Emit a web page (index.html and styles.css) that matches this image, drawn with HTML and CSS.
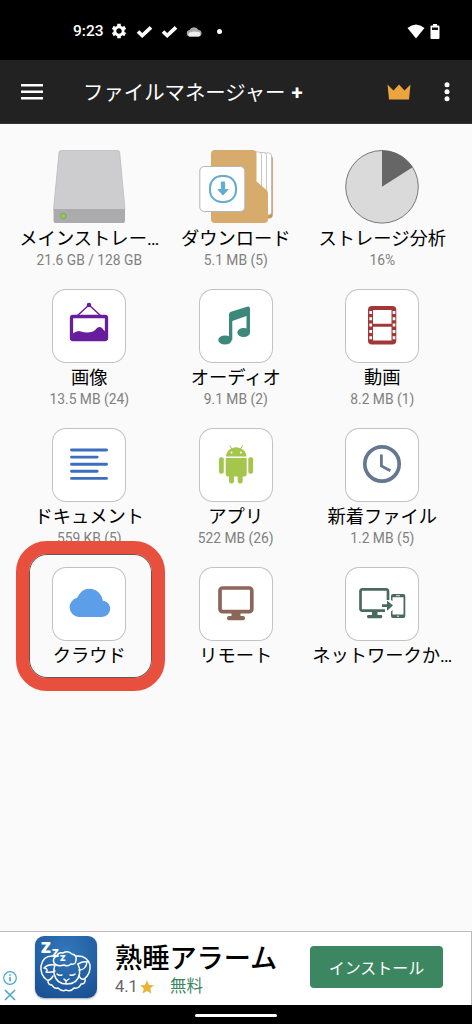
FILE: index.html
```html
<!DOCTYPE html>
<html lang="ja">
<head>
<meta charset="utf-8">
<title>ファイルマネージャー +</title>
<link rel="stylesheet" href="styles.css">
</head>
<body>
<div class="screen">
  <div class="status">
    <span class="time">9:23</span>
    <svg class="gear" width="16" height="16" viewBox="0 0 16 16"><circle cx="8" cy="8" r="4" fill="none" stroke="#fff" stroke-width="3"/><g stroke="#fff" stroke-width="3.6"><path d="M8 .8V4M8 12v3.2M1.8 4.4l2.7 1.6M11.5 10l2.7 1.6M1.8 11.6L4.500 10M11.500 6l2.700-1.600"/></g><circle cx="8" cy="8" r="2.500" fill="#000"/></svg>
    <svg class="check" width="17" height="13" viewBox="0 0 17 13"><path d="M2 6.500l4.200 4L15 2.300" fill="none" stroke="#fff" stroke-width="3.700"/></svg>
    <svg class="check" width="17" height="13" viewBox="0 0 17 13"><path d="M2 6.500l4.200 4L15 2.300" fill="none" stroke="#fff" stroke-width="3.700"/></svg>
    <svg class="wx" width="16" height="11" viewBox="0 0 16 11"><path d="M3.500 10.500a3.300 3.300 0 010-6.500A5 5 0 0112.500 4a3.300 3.300 0 01.5 6.500z" fill="#aaa"/><path d="M3 10.500a3 3 0 01.5-4l4.500-1 5 .5a2.500 2.500 0 010 4.500z" fill="#eee"/></svg>
    <span class="dot"></span>
    <svg class="wifi" width="18" height="15" viewBox="0 0 18 15"><path d="M.5 4Q9-3 17.500 4L9 14.500z" fill="#fff"/></svg>
    <svg width="10" height="15" viewBox="0 0 10 15"><path d="M3 0h4v1.500h1.500q1 0 1 1V14q0 1-1 1h-7q-1 0-1-1V2.500q0-1 1-1H3z" fill="#fff"/><path d="M2 3.500h6v2.500H2z" fill="#111"/></svg>
  </div>
  <div class="appbar">
    <svg width="22" height="16" viewBox="0 0 22 16"><path d="M0 1.300h22M0 7.800h22M0 14.300h22" stroke="#fff" stroke-width="2.500"/></svg>
    <span class="title">ファイルマネージャー<b>+</b></span>
    <svg class="crown" width="24" height="16" viewBox="0 0 24 16"><path d="M.5.500L6.500 6.500 12 .5l5.500 6L23.500.500 22 15.500H2z" fill="#eba43f"/></svg>
    <svg width="6" height="20" viewBox="0 0 6 20"><g fill="#fff"><circle cx="3" cy="2.700" r="2.500"/><circle cx="3" cy="9.700" r="2.500"/><circle cx="3" cy="16.700" r="2.500"/></g></svg>
  </div>
  <div class="grid">
    <div class="item">
      <svg class="art" viewBox="0 0 74 74"><path d="M9.500.5h56q2 0 2.200 2L73 59.500H1.500L7 2.500q.2-2 2.500-2z" fill="#cdcdcf" stroke="#bdbdbf" stroke-width=".8"/><path d="M1.500 59H73v12q0 2-2 2H3.500q-2 0-2-2z" fill="#ababad"/><circle cx="11.300" cy="66" r="2.700" fill="#93cc4c" stroke="#789c4a" stroke-width=".8"/></svg>
      <div class="label">メインストレー…</div><div class="sub">21.6 GB / 128 GB</div>
    </div>
    <div class="item">
      <svg class="art" viewBox="0 0 74 74"><rect x="50" y="5" width="23.800" height="63.500" rx="4" fill="#c8955a"/><g fill="#fff" stroke="#b9b9b9" stroke-width=".8"><rect x="45" y="3" width="27.500" height="62" rx="3"/><rect x="45" y="2.500" width="22.500" height="62" rx="3"/><rect x="40" y="2" width="22.500" height="60" rx="3"/></g><path d="M16 0h37.500q4 0 4 4v27.500L67.500 40q1.500 1.500 1.500 3.500V69q0 4-4 4H16q-4 0-4-4V4q0-4 4-4z" fill="#d7ab6b"/><rect x=".8" y="16.500" width="45" height="45" rx="4.500" fill="#fff" stroke="#b7b5b2"/><rect x="11" y="26" width="26" height="26" rx="11.500" fill="none" stroke="#62add1" stroke-width="2"/><path d="M22.300 32h3.400v7.500H29L24 45l-5-5.500h3.300z" fill="#62add1" stroke="#62add1" stroke-linejoin="round"/></svg>
      <div class="label">ダウンロード</div><div class="sub">5.1 MB (5)</div>
    </div>
    <div class="item">
      <svg class="art" viewBox="0 0 74 74"><circle cx="37" cy="36.800" r="36.300" fill="#dadada" stroke="#777"/><path d="M37 36.800V.500A36.300 36.300 0 0167.600 17.300z" fill="#666"/></svg>
      <div class="label">ストレージ分析</div><div class="sub">16%</div>
    </div>
    <div class="item">
      <svg class="art tile" viewBox="0 0 74 74"><path d="M25 27l12-11 12 11" fill="none" stroke="#681e9c" stroke-width="1.400"/><circle cx="37" cy="16" r="2.300" fill="#681e9c"/><rect x="19.500" y="27.500" width="35" height="23" rx="1.500" fill="#fff" stroke="#681e9c" stroke-width="3.300"/><path d="M20 45q5.500-4 9-2.500 6 2 12 0 2-1 4-3.500 3-2 5 0 2 3 4.500 4v7H20z" fill="#681e9c"/></svg>
      <div class="label">画像</div><div class="sub">13.5 MB (24)</div>
    </div>
    <div class="item">
      <svg class="art tile" viewBox="0 0 74 74"><g fill="#3c887a"><path d="M30 25.500q0-2 2-2.800L48 17.800q3-.8 3 1.700V43h-3.500V27L33.300 32V51H30z"/><ellipse cx="26" cy="51" rx="6.700" ry="4.500"/><ellipse cx="44.700" cy="43.500" rx="6.300" ry="4.500"/></g></svg>
      <div class="label">オーディオ</div><div class="sub">9.1 MB (2)</div>
    </div>
    <div class="item">
      <svg class="art tile" viewBox="0 0 74 74"><rect x="23" y="17" width="28.300" height="38.500" rx="4" fill="#a33636"/><path d="M28 21h18.500v13.800H28zM28 37.800h18.500v13.700H28z" fill="#fff"/><g stroke="#fff" stroke-width="2.700" stroke-dasharray="3 3.300"><path d="M25.700 22v30M49 22v30"/></g></svg>
      <div class="label">動画</div><div class="sub">8.2 MB (1)</div>
    </div>
    <div class="item">
      <svg class="art tile" viewBox="0 0 74 74"><path d="M19.500 22h35M19.500 29.100h25.700M19.500 36.200h35M19.500 43.300h25.700M19.500 50.400h35" stroke="#3b6fbd" stroke-width="2.900" stroke-linecap="round"/></svg>
      <div class="label">ドキュメント</div><div class="sub">559 KB (5)</div>
    </div>
    <div class="item">
      <svg class="art tile" viewBox="0 0 74 74"><g fill="#a5c64d"><path d="M27 28.500q.5-6.500 6-8.300Q37 18.500 41 20.200q6 1.800 6.500 8.300z"/><path d="M26.700 30h21v16q0 2.500-2.500 2.500h-1.500V53a2.500 2.500 0 01-5 0v-4.500H35V53a2.500 2.500 0 01-5 0v-4.500h-1q-2.300 0-2.300-2.500z"/><rect x="20" y="29.300" width="4.800" height="16.500" rx="2"/><rect x="49.300" y="29.300" width="4.800" height="16.500" rx="2"/><path d="M30.700 17.500l2.500 4M43.700 17.500l-2.500 4" stroke="#a5c64d" stroke-width="1"/></g><circle cx="32.500" cy="24.500" r="1" fill="#fff"/><circle cx="41.900" cy="24.500" r="1" fill="#fff"/></svg>
      <div class="label">アプリ</div><div class="sub">522 MB (26)</div>
    </div>
    <div class="item">
      <svg class="art tile" viewBox="0 0 74 74"><g fill="none" stroke="#64798f"><circle cx="37" cy="36" r="17.200" stroke-width="3.700"/><path d="M36.400 26.500V38l9 4.800" stroke-width="2.800"/></g></svg>
      <div class="label">新着ファイル</div><div class="sub">1.2 MB (5)</div>
    </div>
    <div class="item">
      <svg class="art tile" viewBox="0 0 74 74"><path d="M26.500 50a9.800 9.800 0 01-1.300-19.300C28 25 32 21.700 37.500 21.700c7 0 12.300 5 13.300 12 4.200.3 7.400 3.800 7.400 8A8.400 8.400 0 0150 50z" fill="#5c9ee7"/></svg>
      <div class="label">クラウド</div>
      <div class="highlight"></div>
    </div>
    <div class="item">
      <svg class="art tile" viewBox="0 0 74 74"><rect x="21" y="21" width="31.800" height="23.600" rx="2.500" fill="none" stroke="#8c6658" stroke-width="3.700"/><path d="M32.500 46h9v3.300h-9z" fill="#8c6658"/><rect x="28" y="49" width="18" height="4.300" rx="2" fill="#8c6658"/></svg>
      <div class="label">リモート</div>
    </div>
    <div class="item">
      <svg class="art tile" viewBox="0 0 74 74"><g fill="#4a6a5e"><path d="M43 33V24.500Q43 22.300 41 22.300H17.500q-2 0-2 2.200V41.500q0 2.200 2 2.200H40" fill="none" stroke="#4a6a5e" stroke-width="2.700"/><path d="M27 44.500h5.500v4H27z"/><rect x="22" y="48" width="15.300" height="3.200" rx="1.400"/><path d="M37 37.200h5v-3.700l6 5-6 5.200v-3.700h-5z"/><path fill-rule="evenodd" d="M46 33v-4q0-2 2-2h10.300q2 0 2 2v20q0 2-2 2H48q-2 0-2-2v-4.500l1.500-1.500v4.500h11V30.300h-11V34z"/></g><path d="M51 28.700h4" stroke="#fff" stroke-width=".8"/><circle cx="53" cy="49.200" r=".8" fill="#fff"/></svg>
      <div class="label">ネットワークか…</div>
    </div>
  </div>
  <div class="ad">
    <div class="adchoice">
      <svg width="14" height="14" viewBox="0 0 14 14"><circle cx="7" cy="7" r="6.300" fill="none" stroke="#44a9c9" stroke-width="1.200"/><path d="M7 6v4.500M7 3.200v1.500" stroke="#44a9c9" stroke-width="1.600"/></svg>
      <svg width="12" height="12" viewBox="0 0 12 12"><path d="M1 1l10 10M11 1L1 11" stroke="#44a9c9" stroke-width="1.500"/></svg>
    </div>
    <div class="adicon">
      <svg width="62" height="62" viewBox="0 0 62 62" fill="none" stroke="#fff" stroke-width="1.500" stroke-linecap="round" stroke-linejoin="round"><path d="M19 27q-2-5 3-7 1-4 6-3 5-3 9 1 5 1 4 6 0 5-5 4-3 3-7 1-7 2-10-2zM20 29q-2 6-.5 10 2 9 12.500 9t12.500-10q1-5-1.500-10"/><path d="M19 20Q8 19 6 30q-1 9 6 14 3 1 6-4M41 20q11-1 14 9 1 9-6 14-3 1-5-3M19 29q-6-1-10 3 5 1 2 4 5 1 9-1M43 28q5-3 9-2-1 8-8 8"/><path d="M13 45q0 4 4 4 2 4 6 3 4 4 8 2 5 2 8-2 5 1 7-4 5 0 4-5M22 38q2 2 5 1M35 39q3 1 5-1M29 43l2 2 3-2M31 45v2"/><g fill="#fff" stroke="none" class="zzz"><text x="6" y="17" font-size="16">Z</text><text x="17" y="21" font-size="11">Z</text><text x="25" y="25" font-size="9">Z</text></g></svg>
    </div>
    <div class="adtext">
      <div class="adtitle">熟睡アラーム</div>
      <div class="admeta"><span class="rate">4.1</span><svg width="14" height="14" viewBox="0 0 14 14"><path d="M7 .2l2 4.700 5 .4-3.800 3.300 1.200 5L7 10.900l-4.400 2.700 1.200-5L0 5.300l5-.4z" fill="#e8b33c"/></svg><span class="free">無料</span></div>
    </div>
    <div class="install">インストール</div>
  </div>
  <div class="nav"><div class="pill"></div></div>
</div>
</body>
</html>
```
FILE: styles.css
```css
* { box-sizing: border-box; }
body { margin: 0; font-family: Roboto, "Noto Sans CJK JP", sans-serif; background: #fafafa; }
svg { display: block; flex: none; }
.screen { width: 472px; height: 1024px; display: flex; flex-direction: column; overflow: hidden; }
.status { height: 60px; background: #000; color: #fff; display: flex; align-items: center; padding: 2px 32px 0 73px; flex: none; }
.time { font: 500 15.5px/20px Roboto, sans-serif; width: 31px; white-space: nowrap; }
.gear { margin-left: 7px; }
.check { margin-left: 9px; }
.check + .check { margin-left: 8px; }
.wx { margin-left: 8px; }
.dot { width: 5px; height: 5px; border-radius: 50%; background: #fff; margin-left: 15px; }
.wifi { margin-left: auto; margin-right: 5px; }
.appbar { height: 64px; background: #222; border-bottom: 1px solid #333; display: flex; align-items: center; padding: 0 22px 0 21px; flex: none; color: #fff; }
.title { font-size: 20.4px; line-height: 30px; margin-left: 40px; margin-top: 2px; white-space: nowrap; }
.title b { margin-left: 6px; font-weight: 700; }
.crown { margin-left: auto; margin-right: 33px; }
.grid { display: grid; grid-template-columns: repeat(3, 146.5px); grid-auto-rows: 139px; padding: 26px 0 0 16px; flex: 1; }
.item { position: relative; display: flex; flex-direction: column; align-items: center; }
.art { width: 74px; height: 74px; flex: none; }
.tile { background: #fff; box-shadow: inset 0 0 0 1px #c2c2c2; border-radius: 14px; }
.label { font-size: 18.3px; line-height: 26px; margin-top: 2px; color: #000; white-space: nowrap; }
.sub { font-size: 13.8px; line-height: 18px; color: #808080; white-space: nowrap; margin-top: -1px; }
.highlight { position: absolute; left: 0; top: -26px; width: 149px; height: 150px; border: 13px solid #e94f3d; border-radius: 31px; box-shadow: inset 0 0 0 1px #6b5350; }
.ad { height: 74px; flex: none; display: flex; align-items: center; background: #fff; border-top: 1px solid #bbb; border-right: 1px solid #bbb; }
.adchoice { width: 35px; padding: 35px 0 0 3px; display: flex; flex-direction: column; gap: 4px; }
.adchoice svg + svg { margin-left: 1px; }
.adicon { width: 62px; height: 62px; border-radius: 9px; background: radial-gradient(circle at 50% 25%, #3278bb, #174d91); box-shadow: 0 1px 2px #0005; margin-top: -4px; flex: none; }
.zzz { font-family: "Open Sans", sans-serif; font-weight: 800; }
.adtext { margin-left: 18px; height: 73px; padding-top: 8px; }
.adtitle { font-size: 27.2px; line-height: 38px; font-weight: 500; white-space: nowrap; }
.admeta { display: flex; align-items: center; height: 18px; line-height: 18px; }
.rate { font-size: 16.5px; color: #666; width: 25px; }
.free { font-size: 16.5px; color: #3c8661; margin-left: 16px; }
.install { margin-left: auto; margin-right: 28px; margin-top: -3px; width: 133px; height: 42px; line-height: 45px; border-radius: 4px; background: #3c8661; color: #fff; text-align: center; font-size: 16px; }
.nav { height: 19px; background: #000; display: flex; justify-content: center; flex: none; padding-top: 9px; }
.pill { width: 82px; height: 3px; background: #fff; border-radius: 2px; }
```
